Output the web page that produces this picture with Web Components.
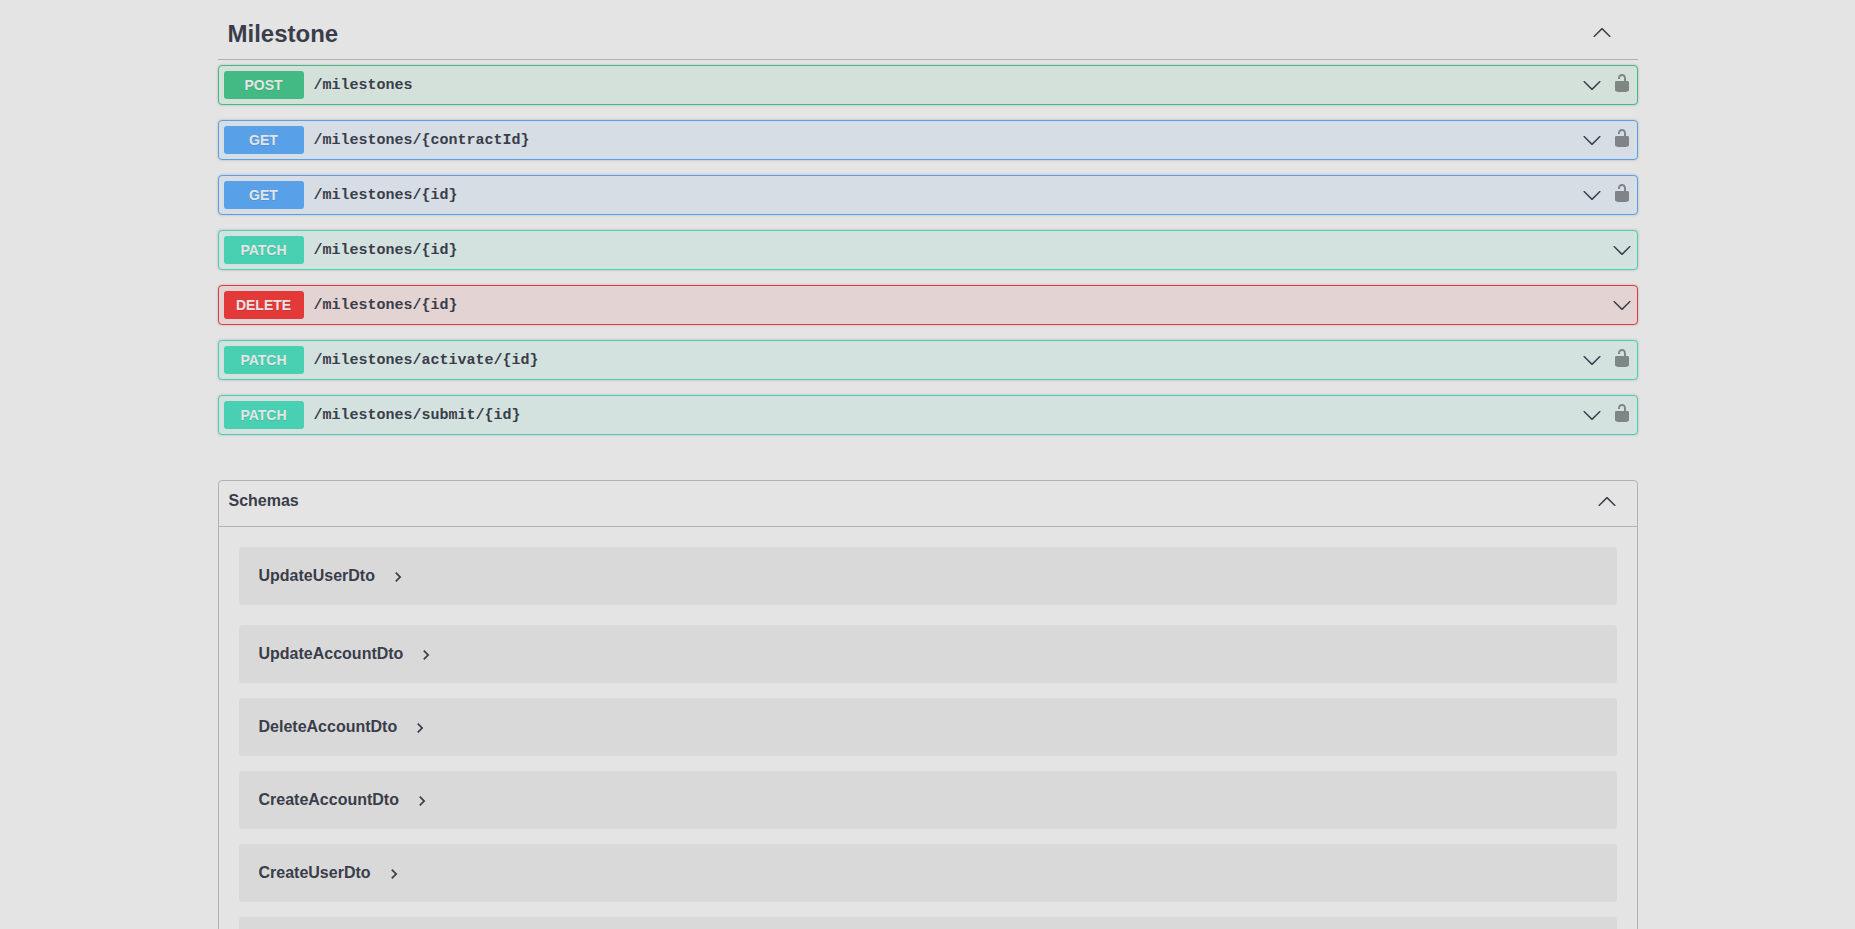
<!DOCTYPE html>
<html lang="en">
<head>
<meta charset="utf-8">
<title>API documentation</title>
<style>
  :root {
    --page: #e4e4e4;
    --ink: #3a3d4a;
    --line: #b0b1b3;
    --panel: #d9d9d9;
  }
  body {
    margin: 0;
    background: var(--page);
    color: var(--ink);
    font-family: "Liberation Sans", Arial, sans-serif;
  }
</style>
</head>
<body>
<api-page>
  <api-tag name="Milestone">
    <api-operation method="post" path="/milestones" secured></api-operation>
    <api-operation method="get" path="/milestones/{contractId}" secured></api-operation>
    <api-operation method="get" path="/milestones/{id}" secured></api-operation>
    <api-operation method="patch" path="/milestones/{id}"></api-operation>
    <api-operation method="delete" path="/milestones/{id}"></api-operation>
    <api-operation method="patch" path="/milestones/activate/{id}" secured></api-operation>
    <api-operation method="patch" path="/milestones/submit/{id}" secured></api-operation>
  </api-tag>
  <api-schemas>
    <api-model>UpdateUserDto</api-model>
    <api-model>UpdateAccountDto</api-model>
    <api-model>DeleteAccountDto</api-model>
    <api-model>CreateAccountDto</api-model>
    <api-model>CreateUserDto</api-model>
    <api-model></api-model>
  </api-schemas>
</api-page>

<script>
  const ICONS = {
    down: ['0 0 20 20', 'M17.418 6.109c.272-.268.709-.268.979 0s.271.701 0 .969l-7.908 7.83c-.27.268-.707.268-.979 0l-7.908-7.83c-.27-.268-.27-.701 0-.969.271-.268.709-.268.979 0L10 13.25l7.418-7.141z'],
    up: ['0 0 20 20', 'M17.418 14.908c.272.268.709.268.979 0s.271-.701 0-.969l-7.908-7.83c-.27-.268-.707-.268-.979 0l-7.908 7.83c-.27.268-.27.701 0 .969.271.268.709.268.979 0L10 7.767l7.418 7.141z'],
    right: ['0 0 24 24', 'M10 6L8.59 7.41 13.17 12l-4.58 4.59L10 18l6-6z'],
    unlocked: ['0 0 20 20', 'M15.8 8H14V5.6C14 2.703 12.665 1 10 1 7.334 1 6 2.703 6 5.6V6h2v-.801C8 3.754 8.797 3 10 3c1.203 0 2 .754 2 2.199V8H4c-.553 0-1 .646-1 1.199V17c0 .549.428 1.139.951 1.307l1.197.387C5.672 18.861 6.55 19 7.1 19h5.8c.549 0 1.428-.139 1.951-.307l1.196-.387c.524-.167.953-.757.953-1.306V9.199C17 8.646 16.352 8 15.8 8z']
  };

  const RESET = `
    * { box-sizing: border-box; }
    button { margin: 0; padding: 0; border: 0; background: none; color: inherit; font: inherit; text-align: left; cursor: pointer; }
  `;

  class ApiIcon extends HTMLElement {
    connectedCallback() {
      const [box, path] = ICONS[this.getAttribute('name')];
      this.attachShadow({ mode: 'open' }).innerHTML = `
        <style>
          :host { display: block; width: 20px; height: 20px; }
          svg { display: block; width: 100%; height: 100%; fill: currentColor; }
        </style>
        <svg viewBox="${box}" aria-hidden="true"><path d="${path}"/></svg>`;
    }
  }

  class ApiPage extends HTMLElement {
    connectedCallback() {
      this.attachShadow({ mode: 'open' }).innerHTML = `
        <style>
          :host { display: block; box-sizing: border-box; max-width: 1460px; margin: 0 auto; padding: 0 20px; }
        </style>
        <slot></slot>`;
    }
  }

  class ApiTag extends HTMLElement {
    connectedCallback() {
      this.attachShadow({ mode: 'open' }).innerHTML = `
        <style>
          ${RESET}
          :host { display: block; }
          header { display: flex; align-items: center; justify-content: space-between; height: 60px; padding: 8px 26px 0 10px; border-bottom: 1px solid var(--line); }
          header button { padding-bottom: 4px; }
          h3 { margin: 0; font-size: 24px; line-height: 32px; }
          .list { display: flex; flex-direction: column; gap: 15px; padding: 5px 0 45px; }
        </style>
        <header>
          <h3>${this.getAttribute('name')}</h3>
          <button aria-label="Collapse operation"><api-icon name="up"></api-icon></button>
        </header>
        <div class="list"><slot></slot></div>`;
    }
  }

  class ApiOperation extends HTMLElement {
    connectedCallback() {
      const method = this.getAttribute('method');
      const lock = this.hasAttribute('secured')
        ? '<button class="lock" aria-label="Authorization button unlocked"><api-icon name="unlocked"></api-icon></button>' : '';
      this.attachShadow({ mode: 'open' }).innerHTML = `
        <style>
          ${RESET}
          :host { display: flex; align-items: center; box-sizing: border-box; gap: 10px; padding: 5px; border: 1px solid var(--tone); border-radius: 4px; background: var(--wash); box-shadow: 0 0 3px rgba(0, 0, 0, .19); }
          :host([method=post]) { --tone: #43ba83; --wash: #d4e0da; }
          :host([method=get]) { --tone: #58a0e8; --wash: #d6dde4; }
          :host([method=patch]) { --tone: #49cfb1; --wash: #d4e2df; }
          :host([method=delete]) { --tone: #e33939; --wash: #e4d3d3; }
          .summary { display: flex; flex: 1; align-items: center; gap: 10px; min-width: 0; }
          .method { width: 80px; border-radius: 3px; background: var(--tone); color: #e4e4e4; font-size: 14px; font-weight: 700; line-height: 28px; text-align: center; text-shadow: 0 1px 0 rgba(0, 0, 0, .1); }
          .path { padding-top: 2px; font-family: "Liberation Mono", Consolas, monospace; font-size: 15px; font-weight: 700; line-height: 20px; }
          .lock { padding-bottom: 4px; color: rgba(0, 0, 0, .4); }
        </style>
        <button class="summary">
          <span class="method">${method.toUpperCase()}</span>
          <span class="path">${this.getAttribute('path')}</span>
        </button>
        <button aria-label="Expand operation"><api-icon name="down"></api-icon></button>
        ${lock}`;
    }
  }

  class ApiSchemas extends HTMLElement {
    connectedCallback() {
      this.attachShadow({ mode: 'open' }).innerHTML = `
        <style>
          ${RESET}
          :host { display: block; border: 1px solid var(--line); border-radius: 4px; }
          header { border-bottom: 1px solid var(--line); }
          h4 { margin: 0; font-size: 16px; line-height: 20px; }
          header button { display: flex; align-items: center; justify-content: space-between; width: 100%; padding: 10px 20px 15px 10px; }
          .models { display: flex; flex-direction: column; gap: 15px; padding: 20px; }
          ::slotted(:first-child) { margin-bottom: 5px; }
        </style>
        <header><h4><button><span>Schemas</span><api-icon name="up"></api-icon></button></h4></header>
        <div class="models"><slot></slot></div>`;
    }
  }

  class ApiModel extends HTMLElement {
    connectedCallback() {
      this.attachShadow({ mode: 'open' }).innerHTML = `
        <style>
          ${RESET}
          :host { display: block; border-radius: 4px; background: var(--panel); }
          button { display: flex; align-items: center; gap: 13px; height: 58px; padding: 0 20px; font-size: 16px; font-weight: 700; line-height: 20px; }
          api-icon { margin-top: 2px; }
        </style>
        <button aria-label="${this.textContent || 'Schema'}"><slot></slot><api-icon name="right"></api-icon></button>`;
    }
  }

  customElements.define('api-icon', ApiIcon);
  customElements.define('api-page', ApiPage);
  customElements.define('api-tag', ApiTag);
  customElements.define('api-operation', ApiOperation);
  customElements.define('api-schemas', ApiSchemas);
  customElements.define('api-model', ApiModel);
</script>
</body>
</html>
